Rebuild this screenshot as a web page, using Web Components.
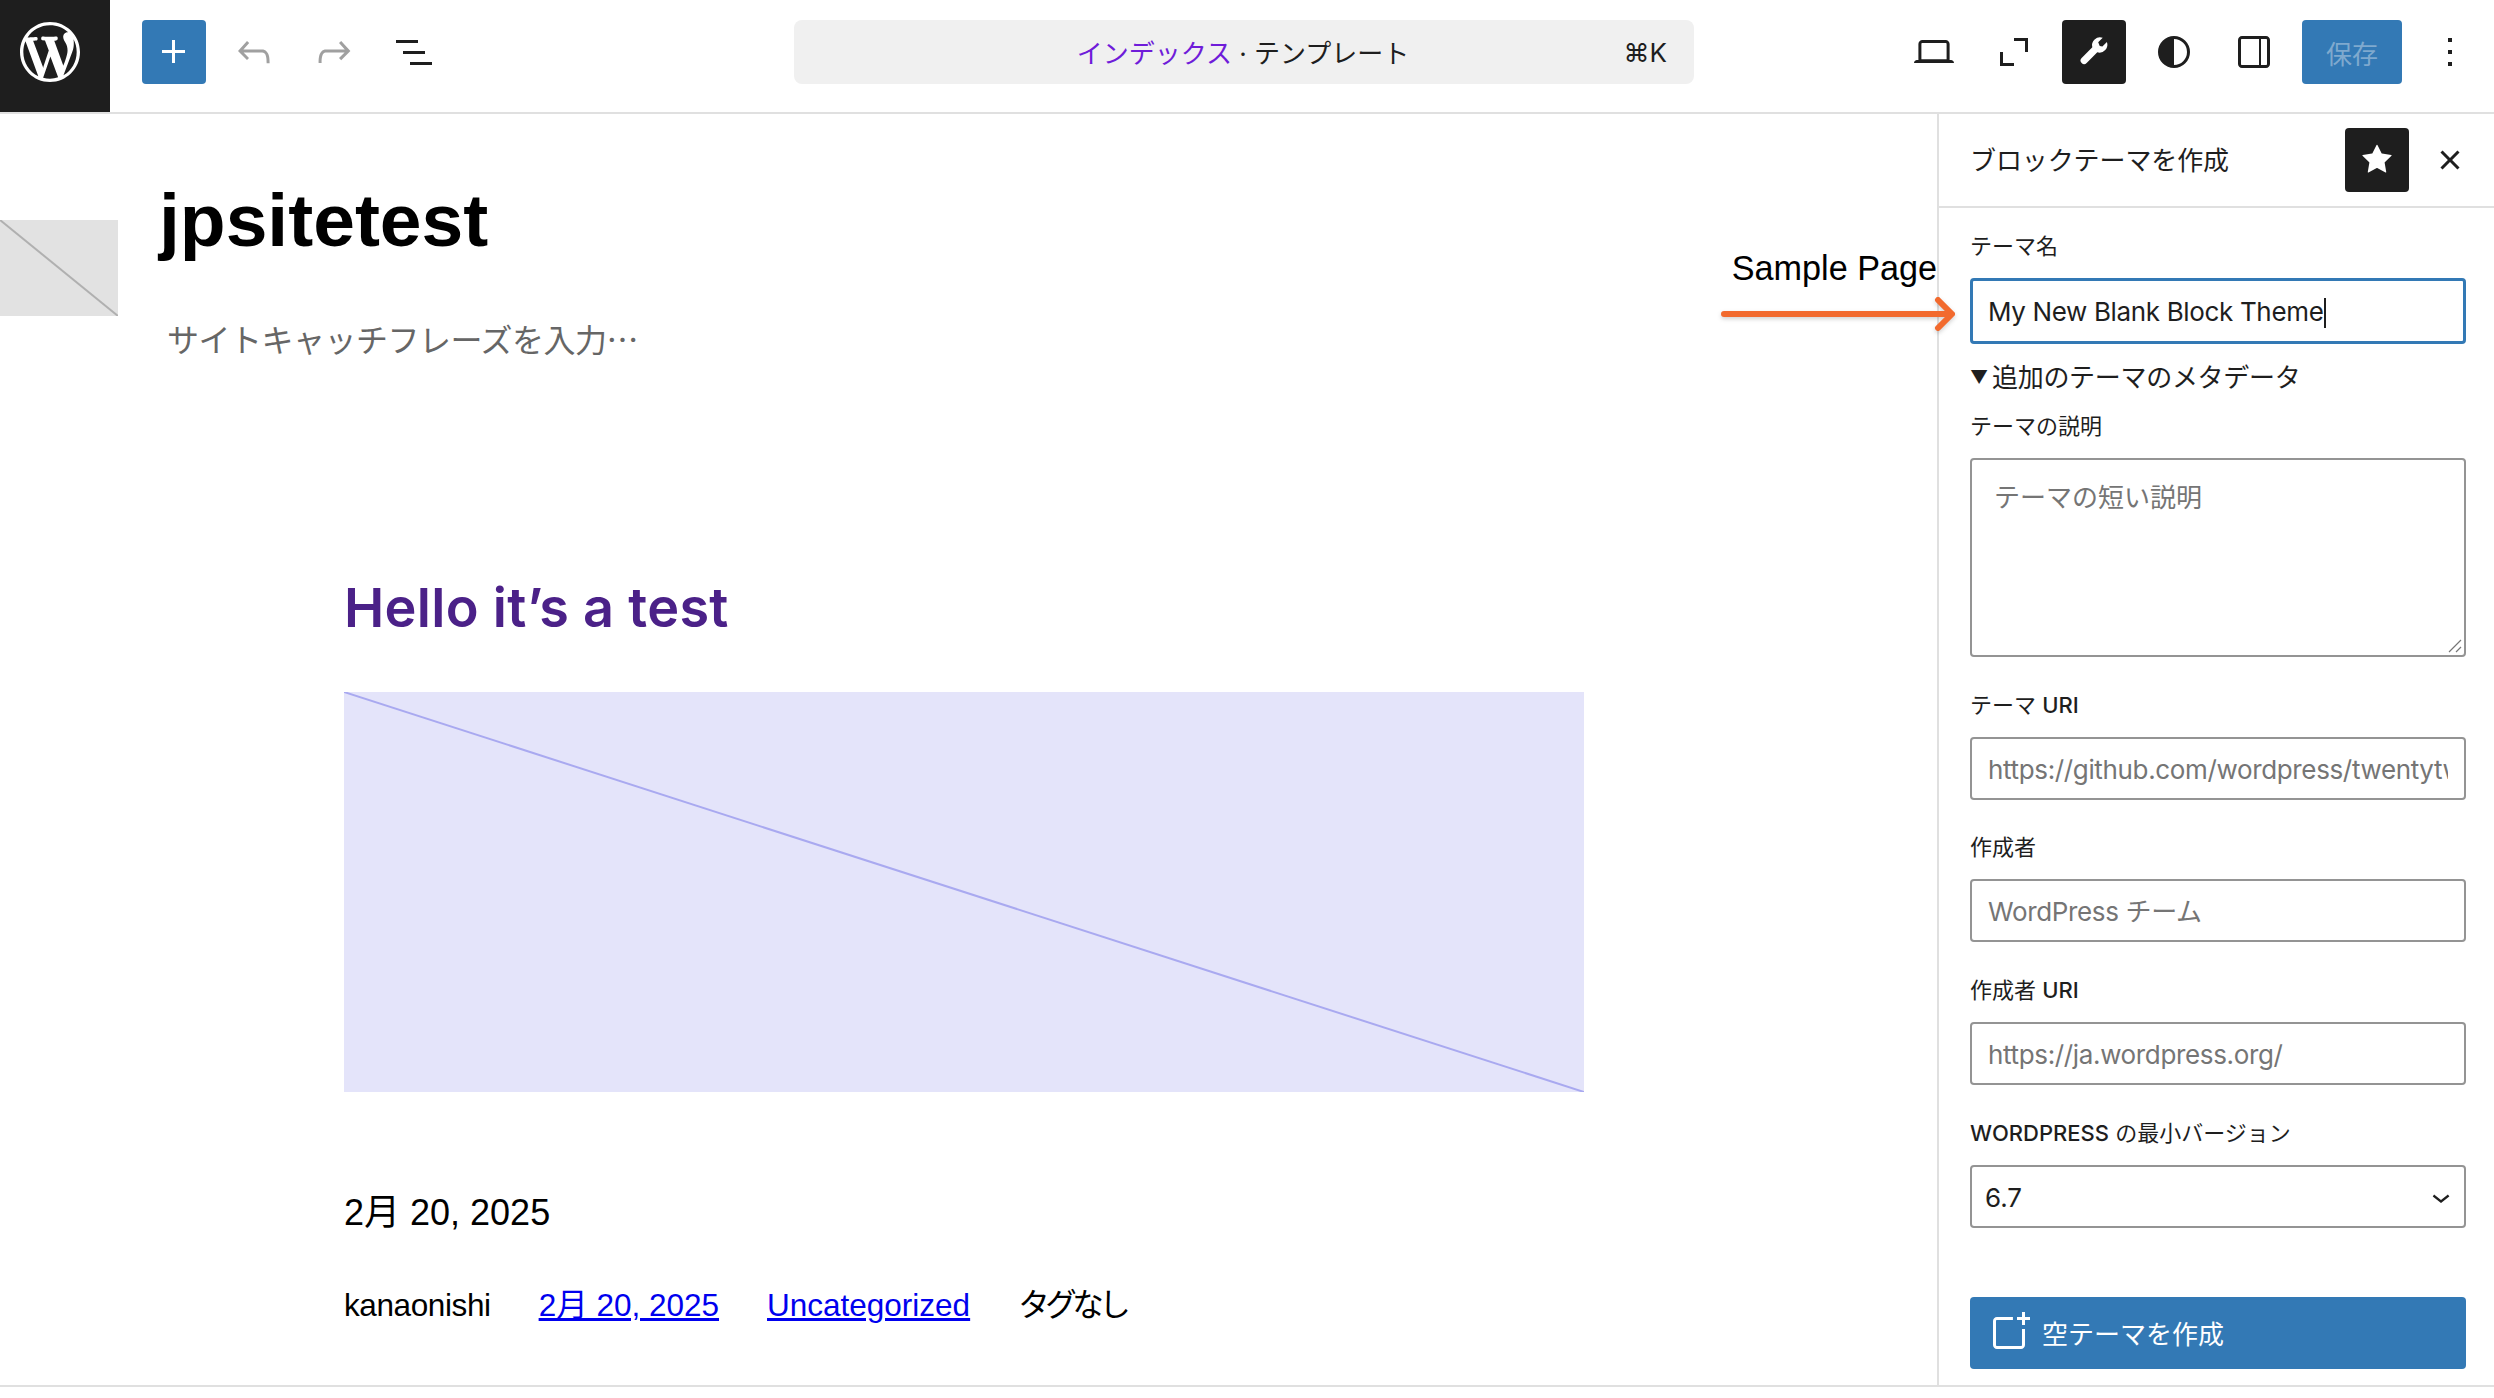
<!DOCTYPE html>
<html lang="ja">
<head>
<meta charset="utf-8">
<title>jpsitetest</title>
<style>
	html, body { margin: 0; padding: 0; background: #fff; }
	body { font-family: Inter, "Noto Sans CJK JP", sans-serif; color: #1e1e1e; }
</style>
</head>
<body>
<wp-app></wp-app>
<script>
const ICONS = {
	logo: [20, `<path fill-rule="evenodd" d="M20 10c0-5.51-4.49-10-10-10C4.48 0 0 4.49 0 10c0 5.52 4.48 10 10 10 5.51 0 10-4.48 10-10zM7.78 15.37L4.37 6.22c.55-.02 1.17-.08 1.17-.08.5-.06.44-1.13-.06-1.11 0 0-1.45.11-2.37.11-.18 0-.37 0-.58-.01C4.12 2.69 6.87 1.11 10 1.11c2.33 0 4.45.87 6.05 2.34-.68-.11-1.65.39-1.65 1.58 0 .74.45 1.36.9 2.1.35.61.55 1.36.55 2.46 0 1.49-1.4 5-1.4 5l-3.03-8.37c.54-.02.82-.17.82-.17.5-.05.44-1.25-.06-1.22 0 0-1.44.12-2.38.12-.87 0-2.33-.12-2.33-.12-.5-.03-.56 1.2-.06 1.22l.92.08 1.26 3.41-1.77 5.32zM17.41 10c.24-.64.74-1.87.43-4.25.7 1.29 1.05 2.71 1.05 4.25 0 3.29-1.73 6.24-4.4 7.78.97-2.59 1.94-5.2 2.92-7.78zM6.1 18.09C3.12 16.65 1.11 13.53 1.11 10c0-1.3.23-2.48.72-3.59C3.25 10.3 4.67 14.2 6.1 18.09zm4.03-6.63l2.58 6.98c-.86.29-1.76.45-2.71.45-.79 0-1.57-.11-2.29-.33.81-2.38 1.62-4.74 2.42-7.1z"/>`],
	plus: [24, `<path d="M11 12.5V17.5H12.5V12.5H17.5V11H12.5V6H11V11H6V12.5H11Z"/>`],
	undo: [24, `<path d="M18.3 11.7c-.6-.6-1.4-.9-2.3-.9H6.7l2.9-3.3-1.1-1-4.5 5L8.5 16l1-1-2.7-2.7H16c.5 0 .9.2 1.3.5 1 1 1 3.4 1 4.5v.3h1.5v-.2c0-1.5 0-4.3-1.5-5.7z"/>`],
	redo: [24, `<path d="M15.6 6.5l-1.1 1 2.9 3.3H8c-.9 0-1.7.3-2.3.9-1.4 1.5-1.4 4.2-1.4 5.6v.2h1.5v-.3c0-1.1 0-3.5 1-4.5.3-.3.7-.5 1.3-.5h9.2L14.5 15l1.1 1.1 4.6-4.6-4.6-5z"/>`],
	list: [24, `<path d="M3 6h11v1.5H3V6Zm3.5 5.5h11V13h-11v-1.5ZM21 17H10v1.5h11V17Z"/>`],
	laptop: [24, `<path d="M20.5 16h-.7V8c0-1.1-.9-2-2-2H6.2c-1.1 0-2 .9-2 2v8h-.7c-.8 0-1.5.7-1.5 1.5h20c0-.8-.7-1.5-1.5-1.5zM5.7 8c0-.3.2-.5.5-.5h11.6c.3 0 .5.2.5.5v7.6H5.7V8z"/>`],
	fullscreen: [24, `<path d="M12 5h7v7h-1.5V6.5H12V5ZM5 12h1.5v5.5H12V19H5v-7Z"/>`],
	wrench: [24, `<path d="M14.103 7.128l2.26-2.26a4 4 0 00-5.207 4.804L5.828 15a1.765 1.765 0 102.497 2.496l5.328-5.327a4 4 0 004.804-5.208l-2.26 2.26-1.329-.263-.765-1.83z"/>`],
	styles: [24, `<path fill-rule="evenodd" d="M12 4a8 8 0 100 16 8 8 0 000-16Zm0 1.5a6.5 6.5 0 010 13v-13Z"/>`],
	drawer: [24, `<path fill-rule="evenodd" d="M18 4H6c-1.1 0-2 .9-2 2v12c0 1.1.9 2 2 2h12c1.1 0 2-.9 2-2V6c0-1.1-.9-2-2-2zM5.5 18V6c0-.3.2-.5.5-.5h8.5v13H6c-.3 0-.5-.2-.5-.5zm13 0c0 .3-.2.5-.5.5h-2.5v-13H18c.3 0 .5.2.5.5v12z"/>`],
	more: [24, `<path d="M13 19h-2v-2h2v2zm0-6h-2v-2h2v2zm0-6h-2V5h2v2z"/>`],
	star: [24, `<path d="M11.776 4.454a.25.25 0 01.448 0l2.069 4.192a.25.25 0 00.188.137l4.626.672a.25.25 0 01.139.426l-3.348 3.263a.25.25 0 00-.072.222l.79 4.607a.25.25 0 01-.362.263l-4.138-2.175a.25.25 0 00-.232 0l-4.138 2.175a.25.25 0 01-.363-.263l.79-4.607a.25.25 0 00-.072-.222L4.754 9.881a.25.25 0 01.139-.426l4.626-.672a.25.25 0 00.188-.137l2.069-4.192z"/>`],
	close: [24, `<path d="M12 13.06l3.712 3.713 1.061-1.06L13.061 12l3.712-3.712-1.06-1.06L12 10.938 8.288 7.227l-1.061 1.06L10.939 12l-3.712 3.712 1.06 1.061L12 13.061z"/>`],
	chevron: [24, `<path d="M17.5 11.6L12 16l-5.5-4.4.9-1.2L12 14l4.6-3.6 1 1.2z"/>`],
	addcard: [24, `<path d="M18.5 5.5V8H20V5.5H22.5V4H20V1.5H18.5V4H16V5.5H18.5ZM13.9624 4H6C4.89543 4 4 4.89543 4 6V18C4 19.1046 4.89543 20 6 20H18C19.1046 20 20 19.1046 20 18V10.0391H18.5V18C18.5 18.2761 18.2761 18.5 18 18.5H6C5.72386 18.5 5.5 18.2761 5.5 18V6C5.5 5.72386 5.72386 5.5 6 5.5H13.9624V4Z"/>`],
};

class WpIcon extends HTMLElement {
	connectedCallback () {
		const [box, body] = ICONS[this.getAttribute("name")];
		const size = this.getAttribute("size") || 48;
		this.attachShadow({ mode: "open" });
		this.shadowRoot.innerHTML = `
			<style>
				:host { display: inline-flex; width: ${size}px; height: ${size}px; flex: none; }
				svg { width: 100%; height: 100%; fill: currentColor; display: block; }
			</style>
			<svg viewBox="0 0 ${box} ${box}">${body}</svg>
		`;
	}
}

class WpButton extends HTMLElement {
	connectedCallback () {
		this.attachShadow({ mode: "open" });
		const width = this.getAttribute("width") || 64;
		const icon = this.getAttribute("icon");
		this.shadowRoot.innerHTML = `
			<style>
				:host {
					display: inline-flex; align-items: center; justify-content: center;
					width: ${width}px; height: 64px; border-radius: 4px; color: #1e1e1e; flex: none;
				}
				:host([variant="primary"]) { background: #3379b5; color: #fff; }
				:host([variant="pressed"]) { background: #1e1e1e; color: #fff; }
				:host([variant="muted"]) { color: #a0a0a0; }
				:host([variant="save"]) { background: #3379b5; color: #7fa9ce; font-size: 26px; }
			</style>
			${icon ? `<wp-icon name="${icon}"></wp-icon>` : "<slot></slot>"}
		`;
	}
}

class WpTopbar extends HTMLElement {
	constructor () {
		super();
		this.attachShadow({ mode: "open" });
		this.shadowRoot.innerHTML = `
			<style>
				:host {
					display: grid; grid-template-columns: 794px 900px 1fr; align-items: start;
					height: 112px; border-bottom: 2px solid #e0e0e0; background: #fff;
					font-size: 26px; color: #1e1e1e;
				}
				.left, .right { display: flex; align-items: flex-start; }
				.logo {
					width: 110px; height: 112px; background: #1e1e1e; color: #fff;
					box-sizing: border-box; padding: 22px 0 0 20px;
				}
				.tools { display: flex; align-items: center; margin: 20px 0 0 32px; gap: 16px; }
				.command {
					height: 64px; margin-top: 20px; border-radius: 8px; background: #f0f0f0;
					display: flex; align-items: center; position: relative; justify-content: center;
				}
				.command .title { padding: 0 2px 2px 0; }
				.command .name { color: #6f1cd9; }
				.command kbd { position: absolute; right: 27px; font: inherit; }
				.right { justify-content: flex-end; gap: 16px; margin-top: 20px; padding-right: 12px; }
			</style>
			<div class="left">
				<div class="logo"><wp-icon name="logo" size="60"></wp-icon></div>
				<div class="tools">
					<wp-button icon="plus" variant="primary"></wp-button>
					<wp-button icon="undo" variant="muted"></wp-button>
					<wp-button icon="redo" variant="muted"></wp-button>
					<wp-button icon="list"></wp-button>
				</div>
			</div>
			<div class="command">
				<span class="title"><span class="name">インデックス</span> · テンプレート</span>
				<kbd>⌘K</kbd>
			</div>
			<div class="right">
				<wp-button icon="laptop"></wp-button>
				<wp-button icon="fullscreen"></wp-button>
				<wp-button icon="wrench" variant="pressed"></wp-button>
				<wp-button icon="styles"></wp-button>
				<wp-button icon="drawer"></wp-button>
				<wp-button variant="save" width="100">保存</wp-button>
				<wp-button icon="more"></wp-button>
			</div>
		`;
	}
}

class WpField extends HTMLElement {
	connectedCallback () {
		this.attachShadow({ mode: "open" });
		const label = this.getAttribute("label");
		const kind = this.getAttribute("kind") || "input";
		this.shadowRoot.innerHTML = `
			<style>
				:host { display: block; }
				.label {
					font-size: 22px; line-height: 28px; text-transform: uppercase;
					color: #1e1e1e; margin-bottom: 18px;
				}
				.label b { font-weight: 500; }
				.box {
					box-sizing: border-box; height: 63px; border: 2px solid #949494; border-radius: 4px;
					font-size: 26px; line-height: 32px; letter-spacing: -0.35px; color: #757575;
					display: flex; align-items: center;
					padding: 2px 16px 0; background: #fff; position: relative;
				}
				.clip { overflow: hidden; white-space: nowrap; flex: 1; }
				.caret { display: inline-block; width: 2px; height: 30px; background: #1e1e1e; vertical-align: middle; margin-left: 1px; }
				:host([kind="focus"]) .box { border: 3px solid #3379b5; height: 66px; padding-left: 15px; color: #1e1e1e; }
				:host([kind="select"]) .box { color: #1e1e1e; padding: 2px 5px 0 13px; letter-spacing: 0; }
				:host([kind="select"]) wp-icon { margin-top: -2px; }
				:host([kind="area"]) .box { height: 199px; align-items: flex-start; padding: 22px 22px; letter-spacing: 0; }
				.grip { position: absolute; right: 2px; bottom: 2px; width: 14px; height: 14px; }
			</style>
			<div class="label">${label}</div>
			<div class="box">
				<div class="clip"><slot></slot>${kind === "focus" ? '<span class="caret"></span>' : ""}</div>
				${kind === "select" ? '<wp-icon name="chevron" size="36"></wp-icon>' : ""}
				${kind === "area" ? '<svg class="grip" viewBox="0 0 14 14"><path d="M1 13 13 1M8 13l5-5" stroke="#767676" stroke-width="1.2" fill="none"/></svg>' : ""}
			</div>
		`;
	}
}

class WpSidebar extends HTMLElement {
	constructor () {
		super();
		this.attachShadow({ mode: "open" });
		this.shadowRoot.innerHTML = `
			<style>
				:host {
					display: flex; flex-direction: column; width: 557px; flex: none; box-sizing: border-box;
					border-left: 2px solid #e0e0e0; background: #fff; color: #1e1e1e; font-size: 26px;
				}
				.head {
					height: 94px; box-sizing: border-box; border-bottom: 2px solid #e0e0e0;
					display: flex; align-items: center; padding: 0 20px 0 31px;
				}
				.head .title { flex: 1; letter-spacing: -0.1px; margin-bottom: 4px; }
				.head wp-icon { margin-left: 17px; }
				.body { padding: 24px 28px 0 31px; display: flex; flex-direction: column; }
				.disclosure { margin: 17px 0 17px; line-height: 34px; letter-spacing: -0.3px; display: flex; align-items: center; }
				.disclosure i { font-style: normal; font-size: 18px; width: 22px; flex: none; }
				.gap { margin-top: 34px; }
				.tight { margin-top: 33px; }
				.cta {
					margin-top: 69px; height: 72px; background: #3379b5; color: #fff; border-radius: 4px;
					display: flex; align-items: center; padding-left: 15px; gap: 9px;
				}
				.cta span { margin-bottom: 2px; }
			</style>
			<div class="head">
				<div class="title">ブロックテーマを作成</div>
				<wp-button icon="star" variant="pressed"></wp-button>
				<wp-icon name="close"></wp-icon>
			</div>
			<div class="body">
				<wp-field label="テーマ名" kind="focus">My New Blank Block Theme</wp-field>
				<div class="disclosure"><i>▼</i>追加のテーマのメタデータ</div>
				<wp-field label="テーマの説明" kind="area">テーマの短い説明</wp-field>
				<wp-field class="gap" label="テーマ <b>URI</b>">https://github.com/wordpress/twentytwentyfive</wp-field>
				<wp-field class="tight" label="作成者">WordPress チーム</wp-field>
				<wp-field class="gap" label="作成者 <b>URI</b>">https://ja.wordpress.org/</wp-field>
				<wp-field class="gap" label="<b>WordPress</b> の最小バージョン" kind="select">6.7</wp-field>
				<div class="cta"><wp-icon name="addcard"></wp-icon><span>空テーマを作成</span></div>
			</div>
		`;
	}
}

class WpPlaceholder extends HTMLElement {
	constructor () {
		super();
		this.attachShadow({ mode: "open" });
		this.shadowRoot.innerHTML = `
			<style>
				:host { display: block; background: var(--fill); overflow: hidden; }
				svg { display: block; width: 100%; height: 100%; }
				line { stroke: var(--ink); stroke-width: 2; vector-effect: non-scaling-stroke; }
			</style>
			<svg viewBox="0 0 100 100" preserveAspectRatio="none"><line x1="0" y1="0" x2="100" y2="100"/></svg>
		`;
	}
}

class WpCanvas extends HTMLElement {
	constructor () {
		super();
		this.attachShadow({ mode: "open" });
		this.shadowRoot.innerHTML = `
			<style>
				:host {
					display: block; flex: 1; min-width: 0; overflow: hidden; background: #fff; color: #000;
					font-family: "Liberation Sans", "Noto Sans CJK JP", sans-serif; font-size: 31.5px;
				}
				.site { display: flex; align-items: flex-start; }
				.logo { width: 118px; height: 96px; margin-top: 106px; --fill: #e2e2e2; --ink: #b0b0b0; flex: none; }
				.brand { margin-left: 41px; flex: 1; padding-top: 62px; }
				h1 { margin: 0; font-size: 75px; line-height: 88px; font-weight: 700; }
				.tag {
					color: #666; margin: 54px 0 0 8px; line-height: 40px; letter-spacing: -0.5px;
					font-family: "Noto Sans CJK JP", sans-serif; font-size: 32px;
				}
				.nav { font-size: 34.2px; line-height: 40px; margin-top: 134px; margin-left: auto; white-space: nowrap; }
				.post { margin: 218px 0 0 344px; width: 1240px; }
				h2 { margin: 0; font-family: Inter, sans-serif; font-size: 54px; line-height: 64px; font-weight: 600; color: #4b2188; letter-spacing: 0.3px; }
				.image { height: 400px; margin-top: 52px; --fill: #e4e4fa; --ink: #a9a9f0; }
				.date { font-size: 36px; line-height: 44px; margin-top: 99px; }
				.meta { display: flex; gap: 48px; margin-top: 50px; line-height: 40px; }
				.meta a { color: #0000ee; text-decoration: underline; }
				.author { letter-spacing: -0.4px; }
				.tags { letter-spacing: -4.5px; }
			</style>
			<div class="site">
				<wp-placeholder class="logo"></wp-placeholder>
				<div class="brand">
					<h1>jpsitetest</h1>
					<div class="tag">サイトキャッチフレーズを入力…</div>
				</div>
				<div class="nav">Sample Page</div>
			</div>
			<div class="post">
				<h2>Hello it’s a test</h2>
				<wp-placeholder class="image"></wp-placeholder>
				<div class="date">2月 20, 2025</div>
				<div class="meta">
					<span class="author">kanaonishi</span>
					<a>2月 20, 2025</a>
					<a>Uncategorized</a>
					<span class="tags">タグなし</span>
				</div>
			</div>
		`;
	}
}

class WpArrow extends HTMLElement {
	constructor () {
		super();
		this.attachShadow({ mode: "open" });
		this.shadowRoot.innerHTML = `
			<style>
				:host { position: absolute; left: 1716px; top: 292px; width: 244px; height: 46px; }
				svg { display: block; overflow: visible; filter: drop-shadow(0 2px 2px rgba(0,0,0,.18)); }
				path { fill: none; stroke: #f26a2e; stroke-width: 6; stroke-linecap: round; stroke-linejoin: round; }
			</style>
			<svg width="244" height="46" viewBox="0 0 244 46"><path d="M8 22H235M222 8l14 14-14 14"/></svg>
		`;
	}
}

class WpApp extends HTMLElement {
	constructor () {
		super();
		this.attachShadow({ mode: "open" });
		this.shadowRoot.innerHTML = `
			<style>
				:host { display: flex; flex-direction: column; height: 1398px; position: relative; overflow: hidden; }
				.main { display: flex; height: 1271px; border-bottom: 2px solid #e0e0e0; overflow: hidden; }
			</style>
			<wp-topbar></wp-topbar>
			<div class="main">
				<wp-canvas></wp-canvas>
				<wp-sidebar></wp-sidebar>
			</div>
			<wp-arrow></wp-arrow>
		`;
	}
}

customElements.define("wp-icon", WpIcon);
customElements.define("wp-button", WpButton);
customElements.define("wp-topbar", WpTopbar);
customElements.define("wp-field", WpField);
customElements.define("wp-sidebar", WpSidebar);
customElements.define("wp-placeholder", WpPlaceholder);
customElements.define("wp-canvas", WpCanvas);
customElements.define("wp-arrow", WpArrow);
customElements.define("wp-app", WpApp);
</script>
</body>
</html>
